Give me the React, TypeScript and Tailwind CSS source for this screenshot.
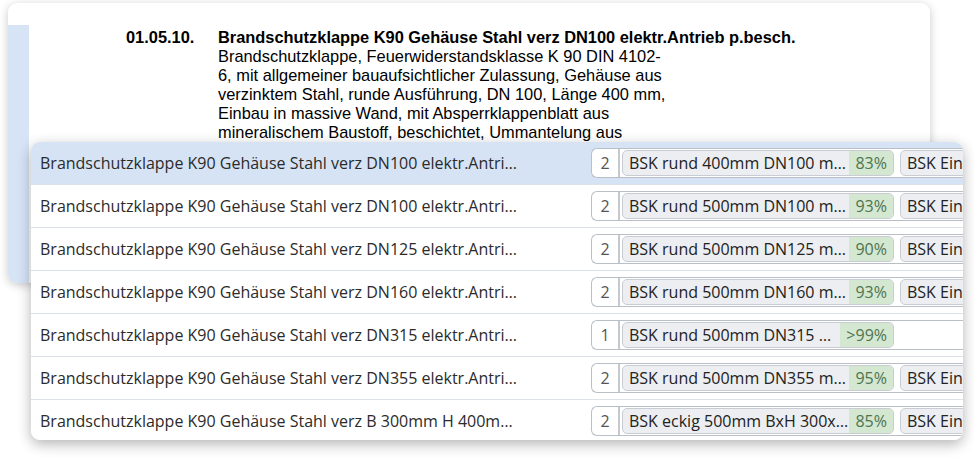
const rows = [
  { name: "Brandschutzklappe K90 Gehäuse Stahl verz DN100 elektr.Antrieb p.besch.", count: 2, match: "BSK rund 400mm DN100 mit elektr. Antrieb", pct: "83%", second: true },
  { name: "Brandschutzklappe K90 Gehäuse Stahl verz DN100 elektr.Antrieb p.besch.", count: 2, match: "BSK rund 500mm DN100 mit elektr. Antrieb", pct: "93%", second: true },
  { name: "Brandschutzklappe K90 Gehäuse Stahl verz DN125 elektr.Antrieb p.besch.", count: 2, match: "BSK rund 500mm DN125 mit elektr. Antrieb", pct: "90%", second: true },
  { name: "Brandschutzklappe K90 Gehäuse Stahl verz DN160 elektr.Antrieb p.besch.", count: 2, match: "BSK rund 500mm DN160 mit elektr. Antrieb", pct: "93%", second: true },
  { name: "Brandschutzklappe K90 Gehäuse Stahl verz DN315 elektr.Antrieb p.besch.", count: 1, match: "BSK rund 500mm DN315 mit elektr. Antrieb", pct: ">99%", second: false },
  { name: "Brandschutzklappe K90 Gehäuse Stahl verz DN355 elektr.Antrieb p.besch.", count: 2, match: "BSK rund 500mm DN355 mit elektr. Antrieb", pct: "95%", second: true },
  { name: "Brandschutzklappe K90 Gehäuse Stahl verz B 300mm H 400mm elektr.Antrieb", count: 2, match: "BSK eckig 500mm BxH 300x400 mit elektr. Antrieb", pct: "85%", second: true },
];

const description = [
  "Brandschutzklappe, Feuerwiderstandsklasse K 90 DIN 4102-",
  "6, mit allgemeiner bauaufsichtlicher Zulassung, Gehäuse aus",
  "verzinktem Stahl, runde Ausführung, DN 100, Länge 400 mm,",
  "Einbau in massive Wand, mit Absperrklappenblatt aus",
  "mineralischem Baustoff, beschichtet, Ummantelung aus",
  "Stahlblech, Auslösung über elektrischen Antrieb 230 V,",
];

function Chip({ label, pct }: { label: string; pct: string }) {
  return (
    <div className="flex h-[26px] w-[272px] shrink-0 items-stretch overflow-hidden rounded-[5px] border border-[#c9cdd3] bg-[#eceef1]">
      <span className="min-w-0 flex-1 truncate pl-[6px] pr-[1px] leading-[24px] text-[#222]">{label}</span>
      <span className="bg-[#d3e7d1] px-[6px] leading-[24px] text-[#4f7450]">{pct}</span>
    </div>
  );
}

export default function App() {
  return (
    <div className="relative h-[458px] w-[974px] overflow-hidden bg-white">
      {/* document card behind */}
      <div className="ml-[8px] mt-[3px] flex h-[280px] w-[922px] overflow-hidden rounded-[9px] bg-white shadow-[0_2px_10px_rgba(0,0,0,0.22)]">
        <div className="mt-[22px] w-[21px] shrink-0 bg-[#d6e4f6]" />
        <div
          className="flex pl-[97px] pt-[25px] text-[16.4px] leading-[19px] text-black"
          style={{ fontFamily: '"Liberation Sans", Arial, sans-serif' }}
        >
          <div className="w-[92px] shrink-0 font-bold">01.05.10.</div>
          <div className="whitespace-nowrap">
            <div className="font-bold">Brandschutzklappe K90 Gehäuse Stahl verz DN100 elektr.Antrieb p.besch.</div>
            {description.map((line) => (
              <div key={line}>{line}</div>
            ))}
          </div>
        </div>
      </div>

      {/* match list on top */}
      <div
        className="absolute left-[31px] top-[142px] h-[298px] w-[932px] overflow-hidden rounded-[9px] bg-white text-[16px] shadow-[0_4px_14px_rgba(0,0,0,0.3)]"
        style={{ fontFamily: '"Open Sans", "Noto Sans", sans-serif' }}
      >
        {rows.map((row, i) => (
          <div
            key={i}
            className={`flex h-[43px] shrink-0 items-center border-b border-[#dde2e8] ${i === 0 ? "bg-[#d5e3f5]" : "bg-white"}`}
          >
            <div className="w-[560px] shrink-0 pl-[9px] pr-[71px]">
              <div className="truncate text-[#2b2b2b]">{row.name}</div>
            </div>
            <div className="flex h-[30px] flex-1 items-center rounded-l-[6px] border border-r-0 border-[#b9bfc7] bg-white">
              <div className="flex h-full w-[28px] shrink-0 items-center justify-center border-r-2 border-[#c4c9d0] text-[#555]">
                {row.count}
              </div>
              <div className="flex items-center gap-[6px] pl-[2px]">
                <Chip label={row.match} pct={row.pct} />
                {row.second && <Chip label="BSK Einbausatz für Massivwand" pct="70%" />}
              </div>
            </div>
          </div>
        ))}
      </div>
    </div>
  );
}
